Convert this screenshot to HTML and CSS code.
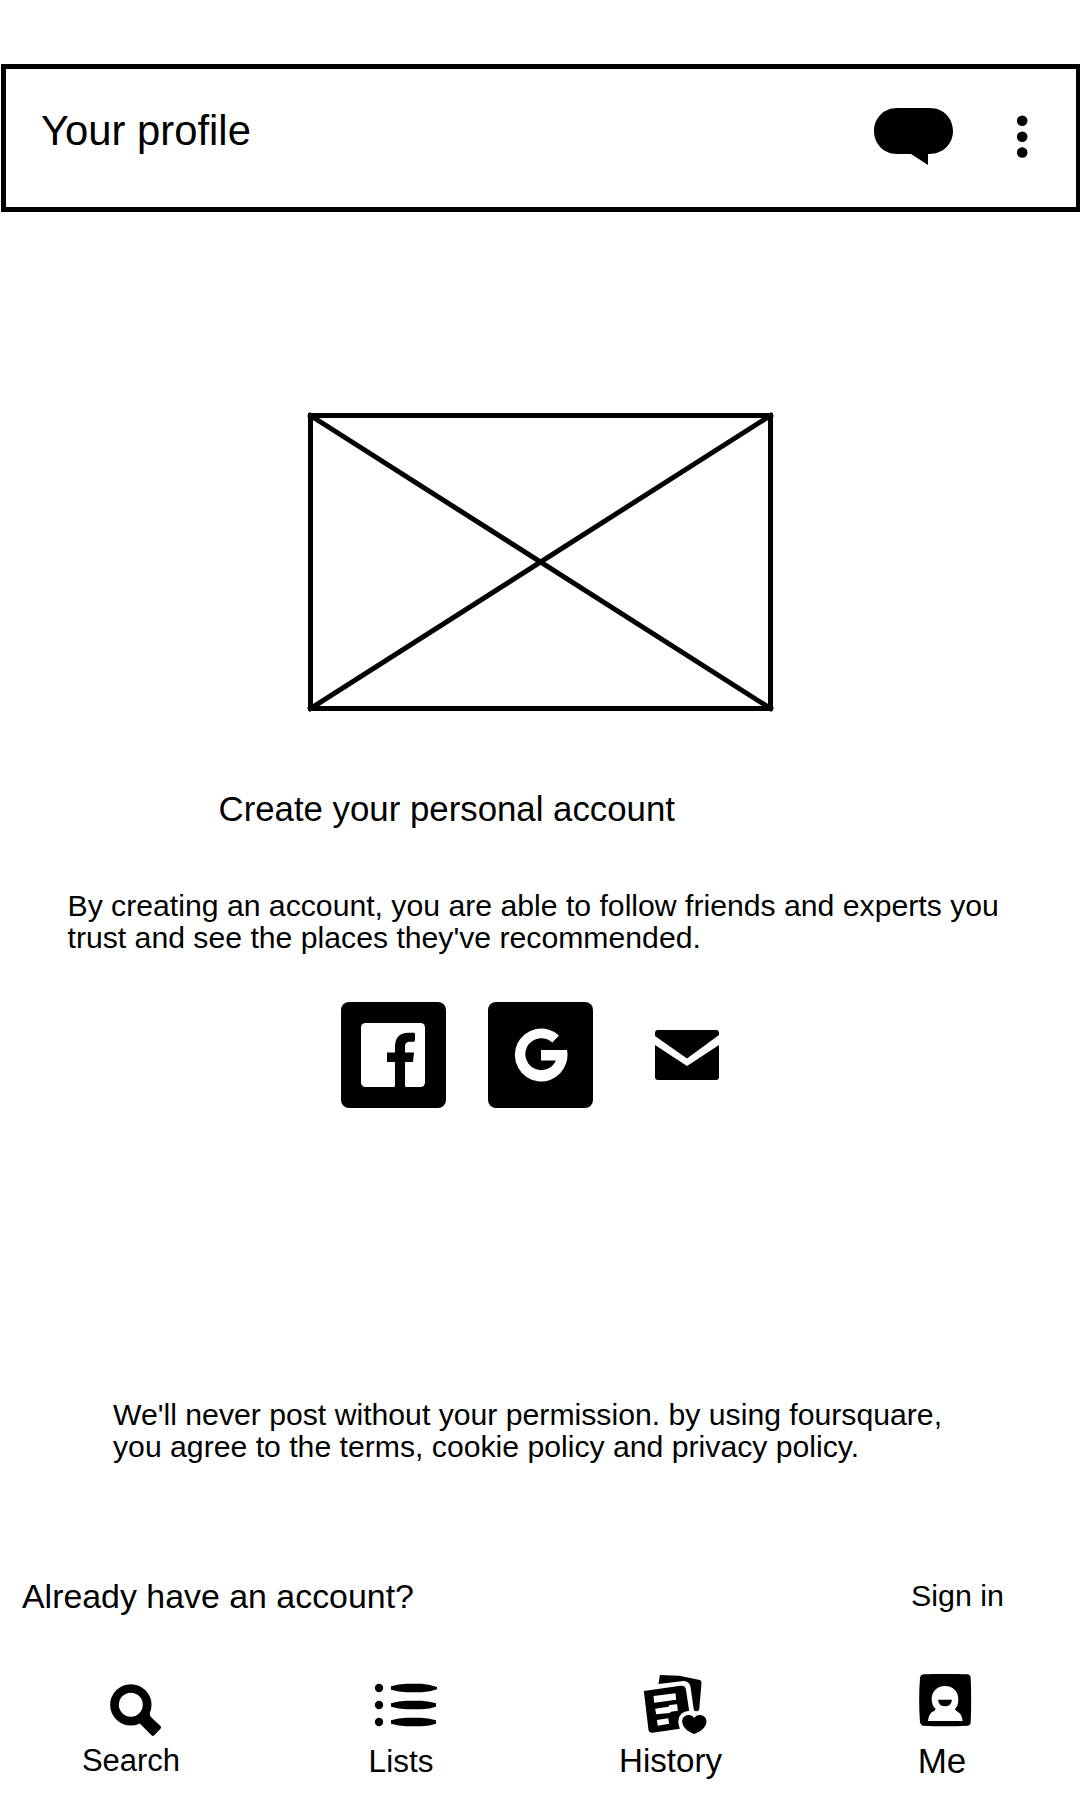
FILE: index.html
```html
<!DOCTYPE html>
<html lang="en">
<head>
<meta charset="utf-8">
<title>Your profile</title>
<link rel="stylesheet" href="styles.css">
</head>
<body>
<div class="screen">
  <header class="topbar">
    <h1 class="topbar-title">Your profile</h1>
    <svg class="icon-chat" viewBox="0 0 79 57" aria-hidden="true"><path d="M23 0H56C70 0 79 11 79 23S70 46 55 46H54V57L37 46H23C9 46 0 35 0 23S9 0 23 0z"/></svg>
    <svg class="icon-more" viewBox="0 0 11 43" aria-hidden="true"><circle cx="5.2" cy="5.8" r="5.3"/><circle cx="5.2" cy="21.8" r="5.3"/><circle cx="5.2" cy="37.5" r="5.3"/></svg>
  </header>

  <main class="content">
    <svg class="placeholder" viewBox="0 0 467 300" aria-hidden="true">
      <rect x="3.5" y="3.5" width="460" height="293"/>
      <path d="M3.5 3.5L463.500 296.500M463.500 3.500L3.500 296.500"/>
    </svg>
    <h2 class="heading">Create your personal account</h2>
    <p class="intro">By creating an account, you are able to follow friends and experts you<br>trust and see the places they've recommended.</p>

    <div class="social">
      <svg class="social-tile" viewBox="0 0 105 106" role="img" aria-label="Facebook">
        <rect width="105" height="106" rx="8"/>
        <rect class="white" x="20" y="21" width="64" height="64" rx="4.500"/>
        <path d="M52.500 85.500Q54 85 54 83V60H46V50.500H54V45C54 35.500 59 30.700 67 30.700H73Q74 31 74 32V38Q74 39.500 72.500 39.800H69C65.500 39.800 64 41.500 64 45V50.500H73L72 60H64V83Q64 85 65.500 85.500z"/>
      </svg>
      <svg class="social-tile" viewBox="0 0 105 106" role="img" aria-label="Google">
        <rect width="105" height="106" rx="8"/>
        <path class="white" d="M71 33.500L64.300 40.500A16 16 0 1 0 68 58.500H53V48H79A26.300 26.500 0 1 1 71 33.500z"/>
      </svg>
      <svg class="social-mail" viewBox="0 0 64 50" role="img" aria-label="Email">
        <path d="M3 0H61Q64 0 64 3V5L32 28.500 0 6V3Q0 0 3 0z"/>
        <path d="M0 15L32 36 64 15V47Q64 50 61 50H3Q0 50 0 47z"/>
      </svg>
    </div>

    <p class="terms">We'll never post without your permission. by using foursquare,<br>you agree to the terms, cookie policy and privacy policy.</p>

    <div class="signin">
      <span class="signin-question">Already have an account?</span>
      <a class="signin-link">Sign in</a>
    </div>
  </main>

  <nav class="tabs">
    <a class="tab">
      <svg class="tab-icon" viewBox="92.500 42 240 198" aria-hidden="true">
        <circle class="ring" cx="212" cy="134.500" r="49"/>
        <path d="M238 190L268 158Q268 168 276 175L301 198Q305 202 301 206L282 226Q278 230 274 226z"/>
      </svg>
      <span class="tab-label search">Search</span>
    </a>
    <a class="tab">
      <svg class="tab-icon" viewBox="903 42 240 198" aria-hidden="true">
        <circle cx="957" cy="84" r="12.500"/><circle cx="957" cy="135" r="12.500"/><circle cx="957" cy="186" r="12.500"/>
        <path d="M993 79Q1015 72 1040 71H1085Q1112 73 1131 81V88Q1112 95 1085 97H1040Q1015 96 993 89zM993 130Q1015 123 1040 122H1085Q1110 124 1128 130V140Q1110 146 1085 148H1040Q1015 147 993 140zM993 181Q1015 174 1040 173H1085Q1110 175 1128 181V191Q1110 197 1085 199H1040Q1015 198 993 191z"/>
      </svg>
      <span class="tab-label lists">Lists</span>
    </a>
    <a class="tab">
      <svg class="tab-icon" viewBox="96.500 42 240 198" aria-hidden="true">
        <path d="M180 45L238 47 300 60Q306 62 305 70L298 150Q288 158 282 150L272 80Q268 64 252 63L176 72z"/>
        <path d="M132 93L242 77Q256 76 258 87L268 152Q238 155 236 181Q234 188 240 206L158 218Q148 219 146 210z"/>
        <path class="white" d="M161 108L227 100 229 119 163 128zM166 146L206 140 209 135 232 133 234 152 213 155 210 159 169 163zM171 180L205 175 208 191 174 197z"/>
        <path d="M283 222C270 218 247 205 247 184C247 164 274 158 283 174C292 158 320 164 320 184C320 205 296 218 283 222z"/>
      </svg>
      <span class="tab-label history">History</span>
    </a>
    <a class="tab">
      <svg class="tab-icon" viewBox="906 42 240 198" aria-hidden="true">
        <path d="M970 43Q1035 40 1103 43Q1112 45 1112 54Q1115 120 1112 188Q1111 196 1102 197Q1035 200 968 197Q961 195 960 187Q955 120 960 54Q961 45 970 43z"/>
        <path class="white" d="M1035 78C1060 78 1075 96 1075 117Q1075 138 1065 147Q1067 153 1073 155Q1086 162 1088 183H1066V180H1004V183H984Q986 164 996 156Q1006 153 1007 147Q995 136 995 117C995 96 1010 78 1035 78z"/>
        <rect class="white" x="1003" y="179" width="64" height="4"/>
        <path d="M1014 119H1056Q1053 139 1035 139T1014 119z"/>
      </svg>
      <span class="tab-label me">Me</span>
    </a>
  </nav>
</div>
</body>
</html>
```

FILE: styles.css
```css
* { box-sizing: border-box; }

body {
  margin: 0;
  background: #fff;
  color: #000;
  font-family: "Liberation Sans", Arial, sans-serif;
}

h1, h2, p { margin: 0; font-weight: 400; }

svg { display: block; flex: none; fill: #000; }
.white { fill: #fff; }

.screen {
  display: flex;
  flex-direction: column;
  width: 1080px;
  height: 1800px;
  padding-top: 64px;
  overflow: hidden;
}

/* Top bar */
.topbar {
  display: flex;
  align-items: flex-start;
  height: 148px;
  margin-left: 1px;
  padding: 39px 48px 0 35px;
  border: 5px solid #000;
  border-right-width: 4px;
}
.topbar-title {
  margin: -1px auto 0 0;
  font-size: 41.8px;
  line-height: 48px;
}
.icon-chat { width: 79px; height: 57px; }
.icon-more { width: 11px; height: 43px; margin: 7px 0 0 64px; }

/* Content */
.content { display: flex; flex-direction: column; }

.placeholder {
  width: 467px;
  height: 300px;
  margin: 200px 0 0 307px;
  fill: none;
  stroke: #000;
  stroke-width: 5px;
  stroke-linecap: square;
}

.heading {
  margin: 77px 0 0 218.5px;
  font-size: 34.8px;
  line-height: 40px;
}

.intro, .terms {
  font-size: 30.2px;
  line-height: 32px;
  white-space: nowrap;
}
.intro { margin: 61px 0 0 67.5px; }
.terms { margin: 291px 0 0 113px; }

.social {
  display: flex;
  align-items: center;
  margin: 48px 0 0 341px;
}
.social-tile { width: 105px; height: 106px; margin-right: 42px; }
.social-mail { width: 64px; height: 50px; margin-left: 20px; }

.signin {
  display: flex;
  justify-content: space-between;
  margin: 113px 76px 0 22px;
  line-height: 40px;
}
.signin-question { font-size: 33.9px; }
.signin-link { font-size: 30.4px; margin-top: -1px; }

/* Bottom tabs */
.tabs {
  display: grid;
  grid-template-columns: repeat(4, 270.5px);
  margin: 58px 0 0 -4.75px;
}
.tab { display: flex; flex-direction: column; align-items: center; }
.tab-icon { width: 80px; height: 66px; }
.ring { fill: none; stroke: #000; stroke-width: 26px; }
.tab-label { line-height: 40px; }
.search { font-size: 31px; margin: 1px 0 0 1px; }
.lists { font-size: 31.5px; margin-top: 1px; }
.history { font-size: 33.1px; margin: 1px 2px 0 0; }
.me { font-size: 35px; margin-top: 1px; }
```
